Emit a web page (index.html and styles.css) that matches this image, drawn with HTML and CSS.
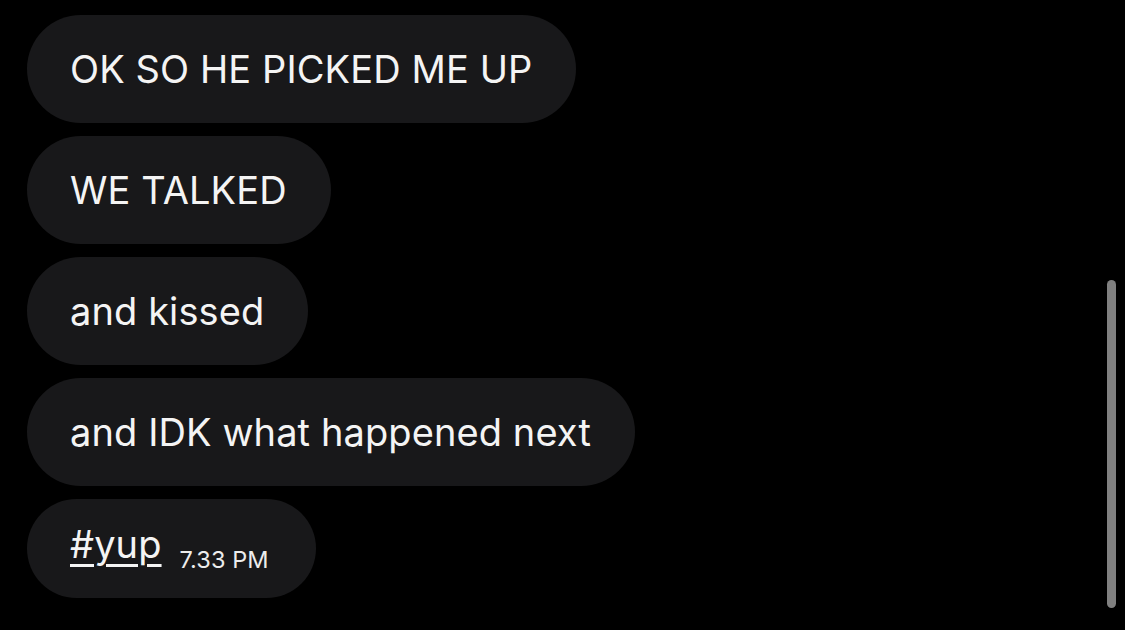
FILE: index.html
```html
<!DOCTYPE html>
<html>
<head>
<meta charset="utf-8">
<link rel="stylesheet" href="styles.css">
</head>
<body>
<div class="chat">
  <div class="bubble">OK SO HE PICKED ME UP</div>
  <div class="bubble">WE TALKED</div>
  <div class="bubble">and kissed</div>
  <div class="bubble">and IDK what happened next</div>
  <div class="bubble last"><span class="tag">#yup</span><span class="time">7.33 PM</span></div>
</div>
<div class="scrollbar"></div>
</body>
</html>
```
FILE: styles.css
```css
html, body {
  margin: 0;
  padding: 0;
  background: #000;
  width: 1125px;
  height: 630px;
  overflow: hidden;
}
body {
  position: relative;
  font-family: Inter, "Open Sans", sans-serif;
  color: #f4f4f4;
}
.chat {
  display: flex;
  flex-direction: column;
  align-items: flex-start;
  gap: 13px;
  padding: 15px 0 0 27px;
}
.bubble {
  height: 108px;
  box-sizing: border-box;
  border-radius: 54px;
  background: #18181a;
  padding: 0 44px 0 43px;
  display: flex;
  align-items: center;
  font-size: 38px;
  letter-spacing: 0.1px;
  white-space: nowrap;
}
.bubble.last {
  display: block;
  height: 99px;
  border-radius: 50px;
  padding: 26px 47px 0 43px;
  line-height: 38px;
}
.tag {
  text-decoration: underline;
  text-underline-offset: 6px;
  text-decoration-thickness: 3px;
}
.time {
  font-size: 23.5px;
  margin-left: 18px;
  vertical-align: -10px;
  color: #ececec;
}
.scrollbar {
  position: absolute;
  left: 1107px;
  top: 280px;
  width: 9px;
  height: 328px;
  border-radius: 5px;
  background: #808080;
}
```
